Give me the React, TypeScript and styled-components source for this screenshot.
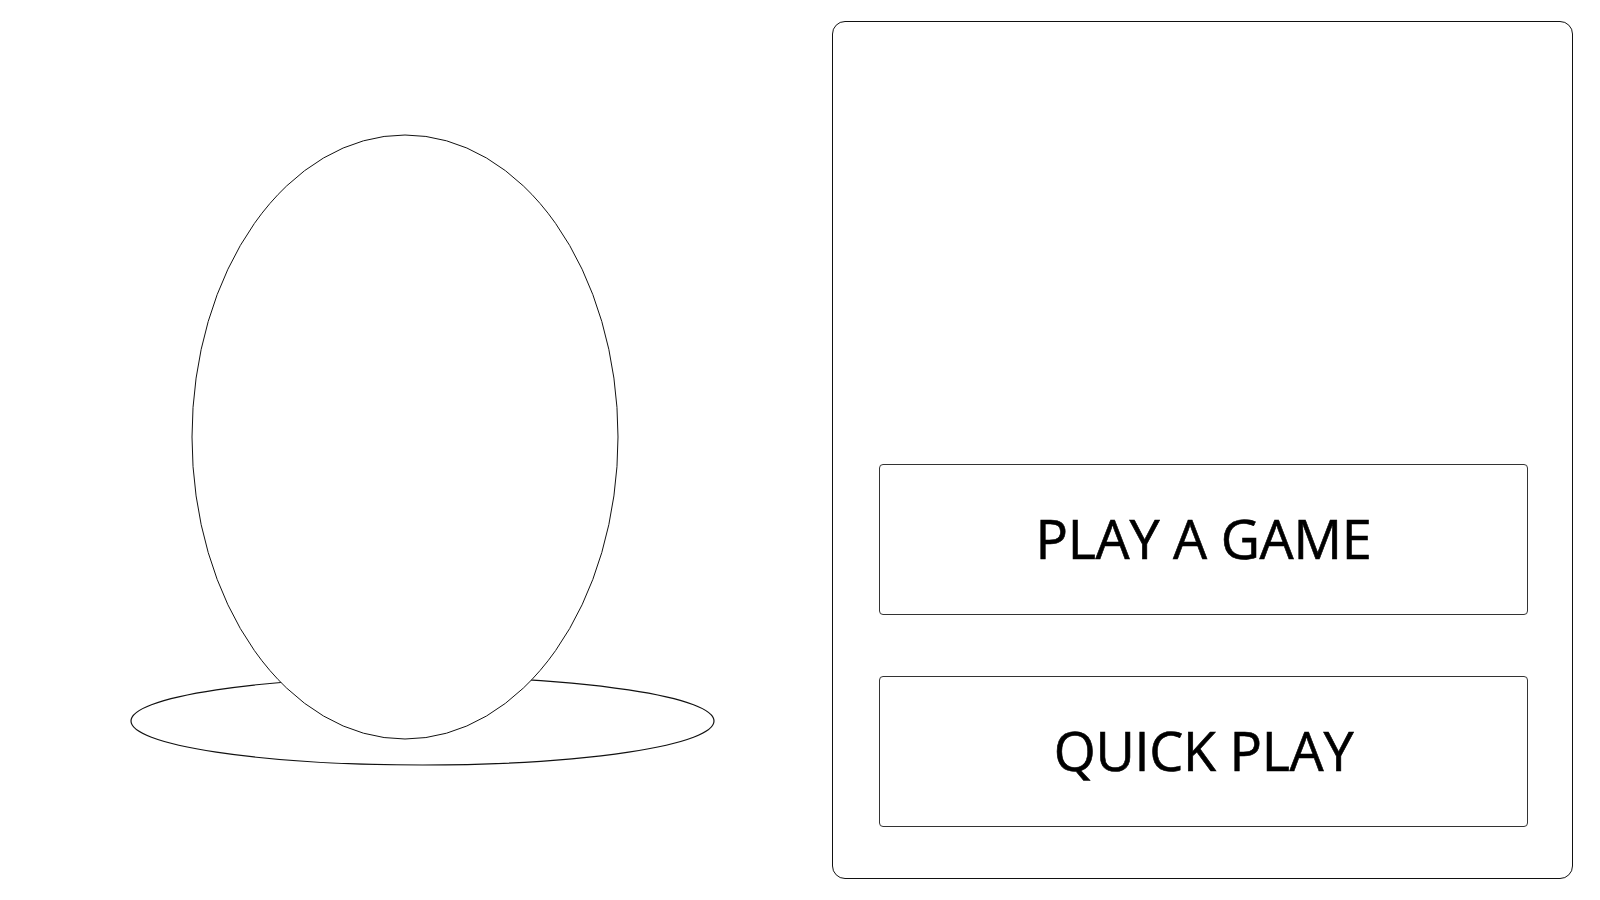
import React from 'react';
import styled, { createGlobalStyle } from 'styled-components';

const GlobalStyle = createGlobalStyle`
  html, body {
    margin: 0;
    padding: 0;
    background: #ffffff;
  }
  body {
    font-family: "Open Sans", "Liberation Sans", sans-serif;
  }
`;

const Page = styled.div`
  width: 1600px;
  height: 900px;
  display: flex;
  box-sizing: border-box;
  padding: 21px 27px 21px 0;
  overflow: hidden;
`;

const Stage = styled.div`
  width: 832px;
  flex-shrink: 0;
  display: flex;
  align-items: flex-start;
`;

const Panel = styled.div`
  flex: 1;
  box-sizing: border-box;
  border: 1.5px solid #111;
  border-radius: 13px;
  display: flex;
  flex-direction: column;
  justify-content: flex-end;
  gap: 61px;
  padding: 0 44px 51px 46px;
`;

const MenuButton = styled.button`
  height: 151px;
  width: 100%;
  box-sizing: border-box;
  background: #fff;
  border: 1.5px solid #333;
  border-radius: 4px;
  font-family: "Open Sans", "Liberation Sans", sans-serif;
  font-size: 54px;
  font-weight: 400;
  line-height: 1;
  color: #000;
  -webkit-text-stroke: 0.6px #000;
  letter-spacing: -0.3px;
  cursor: pointer;
  padding: 0 0 4px 0;
`;

function Egg() {
  return (
    <svg width="832" height="858" viewBox="0 21 832 858">
      <ellipse cx="422.5" cy="721" rx="291.5" ry="44" fill="none" stroke="#111" strokeWidth="1.2" />
      <ellipse cx="405" cy="437" rx="213" ry="302" fill="#fff" stroke="#111" strokeWidth="1" />
    </svg>
  );
}

export default function App() {
  return (
    <>
      <GlobalStyle />
      <Page>
        <Stage>
          <Egg />
        </Stage>
        <Panel>
          <MenuButton>PLAY A GAME</MenuButton>
          <MenuButton>QUICK PLAY</MenuButton>
        </Panel>
      </Page>
    </>
  );
}
